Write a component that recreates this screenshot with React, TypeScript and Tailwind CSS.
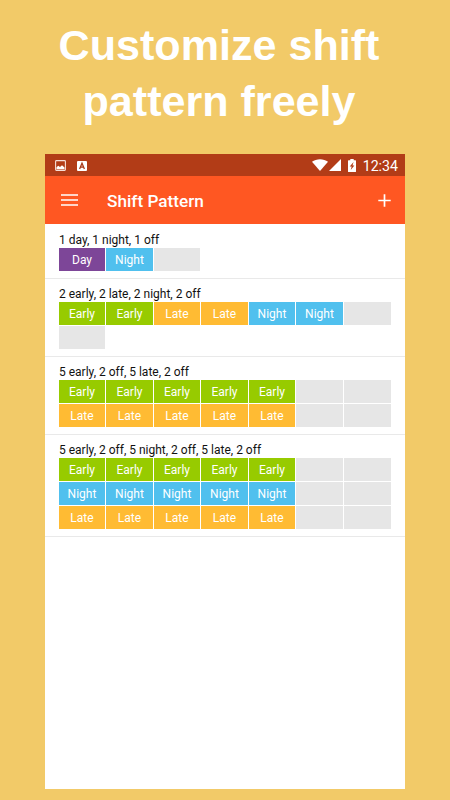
type Shift = "Day" | "Night" | "Early" | "Late" | "";

const colors: Record<Shift, string> = {
  Day: "bg-[#7d4698]",
  Night: "bg-[#50c0ee]",
  Early: "bg-[#97cb00]",
  Late: "bg-[#ffbb33]",
  "": "bg-[#e6e6e6]",
};

const repeat = (shift: Shift, count: number): Shift[] => Array(count).fill(shift);

const patterns: { title: string; shifts: Shift[] }[] = [
  { title: "1 day, 1 night, 1 off", shifts: ["Day", "Night", ""] },
  {
    title: "2 early, 2 late, 2 night, 2 off",
    shifts: [...repeat("Early", 2), ...repeat("Late", 2), ...repeat("Night", 2), ...repeat("", 2)],
  },
  {
    title: "5 early, 2 off, 5 late, 2 off",
    shifts: [...repeat("Early", 5), ...repeat("", 2), ...repeat("Late", 5), ...repeat("", 2)],
  },
  {
    title: "5 early, 2 off, 5 night, 2 off, 5 late, 2 off",
    shifts: [
      ...repeat("Early", 5), ...repeat("", 2),
      ...repeat("Night", 5), ...repeat("", 2),
      ...repeat("Late", 5), ...repeat("", 2),
    ],
  },
];

function StatusBar() {
  return (
    <div className="flex h-[22px] items-center bg-[#b23c17] pr-[7px] pl-[10px] text-white">
      <svg className="mt-px h-[11px] w-[11px]" viewBox="0 0 11 11">
        <rect x="0.6" y="0.6" width="9.8" height="9.8" rx="0.8" fill="none" stroke="#f6dfd8" strokeWidth="1.1" />
        <path d="M1.5 9.3V7.2L3.3 5.8L5 7L7 5.3L9.5 7.5V9.3Z" fill="white" />
      </svg>
      <svg className="mt-px ml-[11px] h-[10px] w-[10px]" viewBox="0 0 10 10">
        <rect width="10" height="10" rx="1" fill="#fff" />
        <path d="M2.6 8L5 2.3L7.4 8M3.5 6.2H6.5" fill="none" stroke="#a83a1b" strokeWidth="1.3" />
      </svg>
      <div className="flex-1" />
      <svg className="h-[12px] w-[16px]" viewBox="0 0 16 12">
        <path d="M0 2.8C4.3-.7 11.7-.7 16 2.8L8 12Z" fill="white" />
      </svg>
      <svg className="ml-px h-[12px] w-[12px]" viewBox="0 0 12 12">
        <path d="M0 12L12 0V12Z" fill="white" />
      </svg>
      <svg className="ml-[7px] h-[13px] w-[8px]" viewBox="0 0 8 13">
        <path d="M0 1.8Q0 1.2.6 1.2H2.3V0H5.7V1.2H7.4Q8 1.2 8 1.8V12.4Q8 13 7.4 13H.6Q0 13 0 12.4Z" fill="white" />
        <path d="M5.6 3L1.7 7.4H3.7L2.7 11L6.4 6.4H4.5Z" fill="#b23c17" />
      </svg>
      <span className="ml-[6.5px] pt-[2px] text-[14.2px] leading-[22px]">12:34</span>
    </div>
  );
}

function AppBar() {
  return (
    <div className="flex h-[48px] items-center bg-[#ff5722] pr-[14.5px] pl-[16px] text-white">
      <svg className="h-[12px] w-[17px]" viewBox="0 0 17 12">
        <path d="M0 1H17M0 6H17M0 11H17" stroke="white" strokeWidth="1.6" />
      </svg>
      <h2 className="ml-[29px] flex-1 pt-px text-[17.2px] leading-[24px] font-medium">Shift Pattern</h2>
      <svg className="h-[13px] w-[13px]" viewBox="0 0 13 13">
        <path d="M0.3 6.5H12.7M6.5 0.3V12.7" stroke="white" strokeWidth="1.7" />
      </svg>
    </div>
  );
}

export default function App() {
  return (
    <div className="flex h-[800px] w-[450px] flex-col bg-[#f2ca68] font-['Roboto',sans-serif]">
      <h1 className="mt-[17px] mr-[12px] h-[137px] text-center font-['Liberation_Sans',Arial,sans-serif] text-[43.1px] leading-[56px] font-bold text-white">
        Customize shift
        <br />
        pattern freely
      </h1>
      <main className="mx-[45px] h-[635px] bg-white">
        <StatusBar />
        <AppBar />
        <div className="pt-px">
          {patterns.map(({ title, shifts }) => (
            <section key={title} className="border-b border-[#e9e9e9] pb-[7px] pl-[14px]">
              <h3 className="h-[23px] pt-[7px] text-[12px] leading-[16px] whitespace-nowrap text-[#111]">{title}</h3>
              <div className="grid grid-cols-[46px_47px_46px_47px_46px_47px_47px] gap-px">
                {shifts.map((shift, index) => (
                  <div
                    key={index}
                    className={`h-[23px] text-center text-[12px] leading-[24px] text-white ${colors[shift]}`}
                  >
                    {shift}
                  </div>
                ))}
              </div>
            </section>
          ))}
        </div>
      </main>
    </div>
  );
}
